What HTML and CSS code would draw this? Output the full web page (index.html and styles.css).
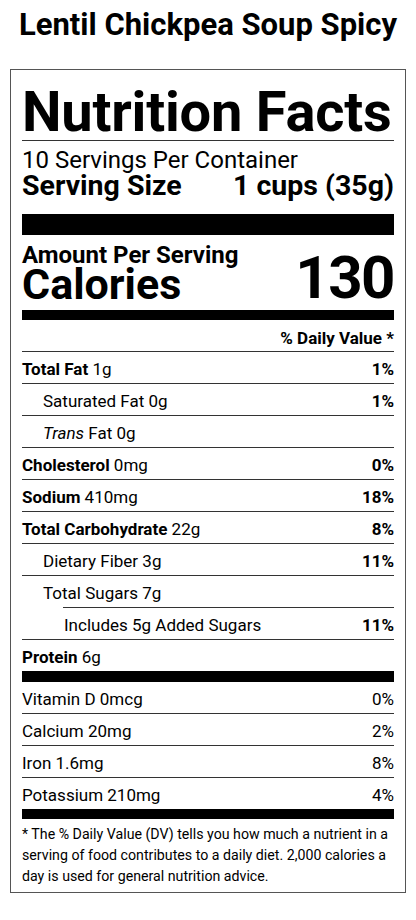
FILE: index.html
```html
<!DOCTYPE html>
<html lang="en">
<head>
    <meta charset="UTF-8">
    <meta name="viewport" content="width=device-width, initial-scale=1.0">
    <title>Lentil Chickpea Soup Spicy</title>
    <link rel="stylesheet" href="styles.css">
</head>
<body>
    <h1 class="product">Lentil Chickpea Soup Spicy</h1>
    <section class="label">
        <h2 class="label-title">Nutrition Facts</h2>
        <div class="servings">10 Servings Per Container</div>
        <div class="serving-size">
            <span>Serving Size</span>
            <span>1 cups (35g)</span>
        </div>
        <div class="bar bar-thick"></div>
        <div class="calories">
            <div>
                <div class="amount">Amount Per Serving</div>
                <div class="calories-label">Calories</div>
            </div>
            <div class="calories-value">130</div>
        </div>
        <div class="bar"></div>
        <div class="dv-head">% Daily Value *</div>
        <div class="row"><span><b>Total Fat</b> 1g</span><b>1%</b></div>
        <div class="row sub"><span>Saturated Fat 0g</span><b>1%</b></div>
        <div class="row sub"><span><i>Trans</i> Fat 0g</span></div>
        <div class="row"><span><b>Cholesterol</b> 0mg</span><b>0%</b></div>
        <div class="row"><span><b>Sodium</b> 410mg</span><b>18%</b></div>
        <div class="row"><span><b>Total Carbohydrate</b> 22g</span><b>8%</b></div>
        <div class="row sub"><span>Dietary Fiber 3g</span><b>11%</b></div>
        <div class="row sub no-line"><span>Total Sugars 7g</span></div>
        <div class="rule-indent"></div>
        <div class="row subsub"><span>Includes 5g Added Sugars</span><b>11%</b></div>
        <div class="row no-line"><span><b>Protein</b> 6g</span></div>
        <div class="bar bar-wide"></div>
        <div class="row"><span>Vitamin D 0mcg</span><span>0%</span></div>
        <div class="row"><span>Calcium 20mg</span><span>2%</span></div>
        <div class="row"><span>Iron 1.6mg</span><span>8%</span></div>
        <div class="row no-line"><span>Potassium 210mg</span><span>4%</span></div>
        <div class="bar"></div>
        <p class="footnote">* The % Daily Value (DV) tells you how much a nutrient in a serving of food contributes to a daily diet. 2,000 calories a day is used for general nutrition advice.</p>
    </section>
</body>
</html>
```

FILE: styles.css
```css
body{
    margin: 0;
    padding: 0 10px;
    font-family: Roboto, "Liberation Sans", sans-serif;
    color: #000;
    background: #fff;
}
.product{
    margin: 6px 0 26px;
    font-size: 31px;
    font-weight: 700;
    text-align: center;
}
.label{
    border: 1px solid #555;
    padding: 0 11px 5px;
}
.label-title{
    margin: 0;
    padding-top: 14px;
    font-size: 56px;
    font-weight: 700;
    line-height: 1;
    letter-spacing: -0.2px;
    white-space: nowrap;
    border-bottom: 1px solid #333;
}
.servings{
    font-size: 24px;
    line-height: 1;
    margin-top: 7px;
}
.serving-size{
    display: flex;
    justify-content: space-between;
    font-size: 28.5px;
    font-weight: 700;
    line-height: 1;
}
.bar{
    height: 10px;
    background: #000;
}
.bar-thick{
    height: 21px;
    margin-top: 13px;
}
.bar-wide{
    height: 11px;
}
.calories{
    display: flex;
    justify-content: space-between;
    align-items: flex-end;
    padding: 8px 0 4px;
}
.amount{
    font-size: 24px;
    font-weight: 700;
    line-height: 1;
}
.calories-label{
    margin-top: -4px;
    font-size: 43px;
    font-weight: 700;
    line-height: 1;
}
.calories-value{
    margin-bottom: -2px;
    font-size: 60px;
    font-weight: 700;
    line-height: 1;
    letter-spacing: -1.5px;
}
.dv-head{
    text-align: right;
    font-size: 17px;
    font-weight: 700;
    padding: 8px 0 3px;
    border-bottom: 1px solid #333;
}
.row{
    display: flex;
    justify-content: space-between;
    font-size: 17px;
    padding: 7px 0 4px;
    border-bottom: 1px solid #333;
}
.row.no-line{
    border-bottom: none;
}
.row.sub{
    padding-left: 21px;
}
.row.subsub{
    padding-left: 42px;
}
.rule-indent{
    height: 1px;
    margin-left: 41px;
    background: #333;
}
.footnote{
    margin: 0;
    padding-top: 5px;
    font-size: 14.2px;
    line-height: 21px;
}
```
